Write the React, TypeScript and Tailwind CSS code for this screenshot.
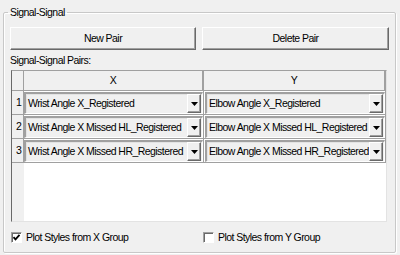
import React from "react";

const rows = [
  { x: "Wrist Angle X_Registered", y: "Elbow Angle X_Registered" },
  { x: "Wrist Angle X Missed HL_Registered", y: "Elbow Angle X Missed HL_Registered" },
  { x: "Wrist Angle X Missed HR_Registered", y: "Elbow Angle X Missed HR_Registered" },
];

function Combo({ value }: { value: string }) {
  return (
    <div className="flex h-full items-center border-l-2 border-t-2 border-l-[#a0a0a0] border-t-[#a0a0a0] border-b border-r border-b-white border-r-white bg-[#f0f0f0] shadow-[inset_1px_1px_0_#e3e3e3]">
      <span className="flex-1 pl-[2px] whitespace-nowrap overflow-hidden">{value}</span>
      <div className="flex h-[19px] w-[14px] items-center justify-center border-r border-b border-r-[#696969] border-b-[#696969] border-l border-t border-l-white border-t-white bg-[#f0f0f0] shadow-[inset_-1px_-1px_0_#a0a0a0] mr-[1px]">
        <svg width="7" height="4" viewBox="0 0 7 4">
          <path d="M0 0h7L3.5 4z" fill="#000" />
        </svg>
      </div>
    </div>
  );
}

function Check({ checked, label }: { checked: boolean; label: string }) {
  return (
    <label className="flex items-center gap-[4px]">
      <span className="flex h-[11px] w-[11px] items-center justify-center border-l border-t border-l-[#a0a0a0] border-t-[#a0a0a0] border-r border-b border-r-white border-b-white bg-white shadow-[inset_1px_1px_0_#696969]">
        {checked && (
          <svg width="9" height="9" viewBox="0 0 9 9">
            <path d="M1.5 4.2l2 2.2L7.5 1.8" stroke="#000" strokeWidth="1.8" fill="none" />
          </svg>
        )}
      </span>
      <span>{label}</span>
    </label>
  );
}

export default function App() {
  return (
    <div className="w-[400px] h-[255px] overflow-hidden bg-[#f0f0f0] pl-[3px] pt-[6px] font-['Liberation_Sans',Arial,sans-serif] text-[10.5px] leading-[13px] tracking-[-0.55px] text-black">
      <fieldset className="m-0 h-[247px] w-[392px] border border-[#c8c8c8] rounded-[2px] px-[6px] pb-0 pt-0 shadow-[1px_1px_0_white,inset_1px_1px_0_white]">
        <legend className="-ml-[2px] px-[2px] leading-[13px]">Signal-Signal</legend>

        <div className="mt-[8px] flex gap-[6px]">
          <button className="h-[23px] w-[186px] border border-t-white border-l-white border-r-[#696969] border-b-[#696969] bg-[#f0f0f0] shadow-[inset_-1px_-1px_0_#a0a0a0]">
            New Pair
          </button>
          <button className="h-[23px] w-[187px] border border-t-white border-l-white border-r-[#696969] border-b-[#696969] bg-[#f0f0f0] shadow-[inset_-1px_-1px_0_#a0a0a0]">
            Delete Pair
          </button>
        </div>

        <div className="mt-[4px]">Signal-Signal Pairs:</div>

        <div className="mt-[3px] ml-[1px] flex h-[152px] w-[376px] flex-col border-l border-t border-l-[#696969] border-t-[#a0a0a0] border-r border-b border-r-[#e3e3e3] border-b-[#e3e3e3] bg-white">
          <div className="flex h-[20px] bg-[#f0f0f0]">
            <div className="w-[12px] border-r border-b border-[#a0a0a0]" />
            <div className="flex w-[180px] items-center justify-center border-r-2 border-b border-[#a0a0a0]">X</div>
            <div className="flex w-[182px] items-center justify-center border-r-2 border-b border-[#a0a0a0]">Y</div>
          </div>
          <div className="flex flex-1">
            <div className="w-[12px] bg-[#f0f0f0]">
              {rows.map((_, i) => (
                <div key={i} className="flex h-[24px] items-center border-r border-b border-[#a0a0a0] pl-[4px]">
                  {i + 1}
                </div>
              ))}
            </div>
            <div className="flex-1">
              {rows.map((r, i) => (
                <div key={i} className="flex h-[24px]">
                  <div className="w-[180px] border-r border-b border-[#a0a0a0] pt-[1px]">
                    <Combo value={r.x} />
                  </div>
                  <div className="w-[182px] border-r border-b border-[#a0a0a0] pt-[1px] pl-[1px]">
                    <Combo value={r.y} />
                  </div>
                </div>
              ))}
            </div>
          </div>
        </div>

        <div className="mt-[9px] ml-[1px] flex">
          <div className="w-[192px]">
            <Check checked label="Plot Styles from X Group" />
          </div>
          <Check checked={false} label="Plot Styles from Y Group" />
        </div>
      </fieldset>
    </div>
  );
}
